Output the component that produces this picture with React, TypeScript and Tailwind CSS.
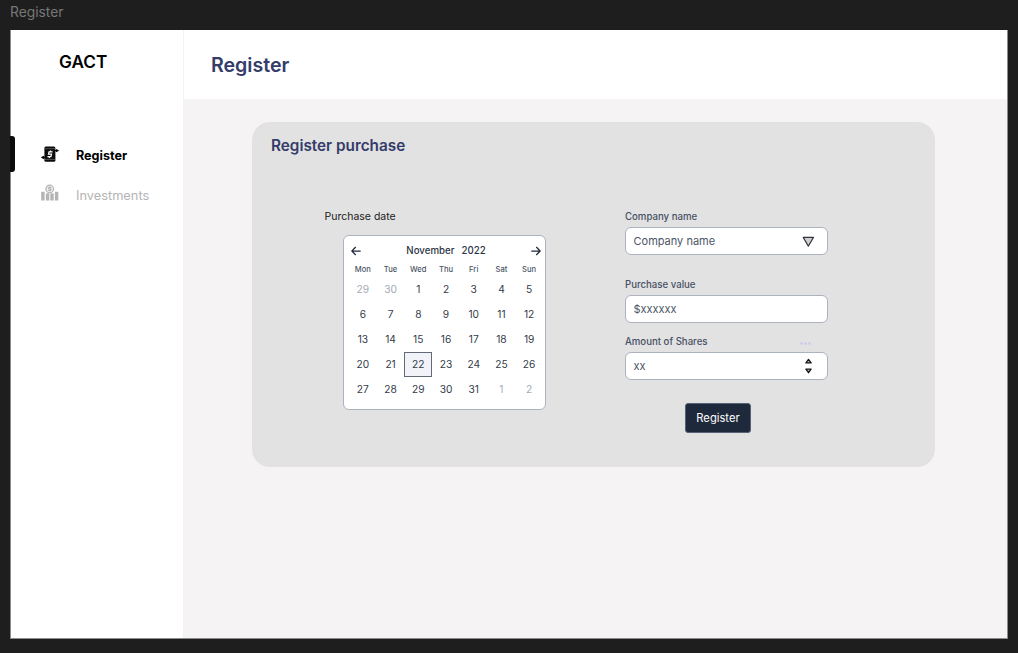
import React from "react";

const weekdays = ["Mon", "Tue", "Wed", "Thu", "Fri", "Sat", "Sun"];
const days = [29, 30, ...Array.from({ length: 31 }, (_, i) => i + 1), 1, 2];

function ReceiptIcon() {
  return (
    <svg className="h-[18px] w-[18px] shrink-0" viewBox="0 0 18 18" fill="none">
      <rect x="3.4" y="1.4" width="11" height="15.4" rx="1.5" fill="#0b0b0b" />
      <path d="M4 3.7h10M4 14.4h10" stroke="#999" strokeWidth="0.5" />
      <path d="M14 5.6h2.4M15 4.6l1.9 1-1.9 1.2M4 12.4H1.6M2.9 11.2L.9 12.4l2 1.2" fill="#0b0b0b" stroke="#0b0b0b" strokeWidth="1.3" />
      <path d="M11.6 6.9H8L7.5 9.2h3l-.6 2.4H6.4M9.7 5.5l-.4 1.4M8.5 11.6l-.3 1.4" stroke="#fff" strokeWidth="1.2" />
    </svg>
  );
}

function InvestmentsIcon() {
  return (
    <svg className="h-[18px] w-[18px] shrink-0" viewBox="0 0 18 18" fill="none">
      <g fill="#b4b4b4">
        <rect x="0.2" y="7.8" width="3.4" height="8.7" />
        <rect x="4.9" y="9.4" width="3.4" height="7.1" />
        <rect x="9.3" y="9.4" width="3.4" height="7.1" />
        <rect x="13.9" y="7.8" width="3.4" height="8.7" />
      </g>
      <circle cx="8.7" cy="5" r="3.8" fill="#eee" stroke="#b4b4b4" strokeWidth="1.2" />
      <path d="M10.3 3.5H7.6v1.4h2.3v1.5H7.2M8.7 2.6v.8M8.7 6.5v.9" stroke="#a8a8a8" strokeWidth="0.9" />
    </svg>
  );
}

function Arrow({ flip = false }: { flip?: boolean }) {
  return (
    <svg className={flip ? "h-[10px] w-[10px] rotate-180" : "h-[10px] w-[10px]"} viewBox="0 0 10 10" fill="none">
      <path d="M9.7 5H.9M4.7 1L.8 5l3.9 4" stroke="#1d2838" strokeWidth="1.25" />
    </svg>
  );
}

function Field({ label, value, children }: { label: React.ReactNode; value: string; children?: React.ReactNode }) {
  return (
    <div>
      <div className="flex h-[14px] items-center justify-between pl-[0.5px] text-[9.65px] font-medium text-[#475164]">{label}</div>
      <div className="mt-[3px] flex h-[28px] items-center justify-between rounded-[6px] border border-[#adb2bf] bg-white pr-[12px] pl-[8px] text-[11px] text-[#4b5565]">
        <span>{value}</span>
        {children}
      </div>
    </div>
  );
}

export default function App() {
  return (
    <div className="flex h-[653px] w-[1018px] flex-col overflow-hidden bg-[#1e1e1e] pr-[10px] pb-[14px] pl-[10px] font-['Inter',sans-serif]">
      <div className="h-[30px] shrink-0 pt-[2px] text-[13.8px] leading-[20px] text-[#777]">Register</div>
      <div className="flex min-h-0 flex-1 border-r border-b border-l border-[#8c8c8c] bg-white">
        <aside className="w-[173px] shrink-0 border-r border-[#f2f3f4] bg-white">
          <div className="pt-[20px] pl-[48px] text-[17.2px] leading-[24px] font-semibold text-black">GACT</div>
          <nav className="pt-[62px]">
            <div className="flex h-[36px] items-center">
              <span className="-ml-px h-[36px] w-[4.5px] rounded-r-[3px] bg-[#0b0b0b]" />
              <span className="ml-[26.5px]"><ReceiptIcon /></span>
              <span className="ml-[17px] pt-[4px] text-[12.6px] font-bold text-black">Register</span>
            </div>
            <div className="mt-[4px] flex h-[36px] items-center pl-[30px]">
              <span className="pb-[2px]"><InvestmentsIcon /></span>
              <span className="ml-[17px] pt-[3px] text-[12.8px] text-[#b4b4b4]">Investments</span>
            </div>
          </nav>
        </aside>
        <div className="flex min-w-0 flex-1 flex-col">
          <header className="h-[69px] shrink-0 bg-white pt-[21px] pl-[27px] text-[19.6px] leading-[28px] font-semibold text-[#343c6a]">
            Register
          </header>
          <main className="flex-1 bg-[#f5f3f4] pt-[23px] pl-[68px]">
            <section className="h-[345px] w-[683px] rounded-[18px] bg-[#e2e2e2] pt-[14px] pl-[19px]">
              <h2 className="text-[15.3px] leading-[20px] font-semibold text-[#343c6a]">Register purchase</h2>
              <div className="flex">
                <div className="w-[353.5px] pt-[54px] pl-[53.5px]">
                  <div className="text-[10.5px] leading-[14px] text-[#1b1b1b]">Purchase date</div>
                  <div className="mt-[11px] ml-[18.5px] h-[175px] w-[203px] rounded-[6px] border border-[#adb2bf] bg-white pr-[2px] pl-[5px]">
                    <div className="flex h-[29px] items-center justify-between pr-[2px] pl-[2px] text-[9.7px] font-medium text-[#2c3646]">
                      <Arrow />
                      <span className="flex gap-[7px] pt-[2px]"><span>November</span><span>2022</span></span>
                      <Arrow flip />
                    </div>
                    <div className="grid h-[12px] grid-cols-7 text-center text-[7.6px] leading-[9px] font-medium text-[#4b5565]">
                      {weekdays.map((day) => <span key={day}>{day}</span>)}
                    </div>
                    <div className="grid grid-cols-7 text-center text-[10.2px] text-[#323b49]">
                      {days.map((day, i) => (
                        <span
                          key={i}
                          className={
                            i === 23
                              ? "flex h-[25px] items-center justify-center border border-[#626a78] bg-[#f1f3f9]"
                              : i < 2 || i > 32
                                ? "flex h-[25px] items-center justify-center text-[#a2aab6]"
                                : "flex h-[25px] items-center justify-center"
                          }
                        >
                          {day}
                        </span>
                      ))}
                    </div>
                  </div>
                </div>
                <form className="w-[203px] pt-[54px]">
                  <Field label="Company name" value="Company name">
                    <svg className="h-[11px] w-[13px]" viewBox="0 0 13 11">
                      <path d="M1.2 1.4h10.3L6.35 10.1z" fill="#d0d0d0" stroke="#30343a" strokeWidth="1.1" strokeLinejoin="round" />
                    </svg>
                  </Field>
                  <div className="mt-[23px]"><Field label="Purchase value" value="$xxxxxx" /></div>
                  <div className="mt-[12px]">
                    <Field
                      label={
                        <>
                          <span>Amount of Shares</span>
                          <svg className="mt-[2px] mr-[17px] h-[3px] w-[11px]" viewBox="0 0 11 3" fill="#cbc6ee">
                            <circle cx="1.5" cy="1.5" r="1.2" /><circle cx="5.5" cy="1.5" r="1.2" /><circle cx="9.5" cy="1.5" r="1.2" />
                          </svg>
                        </>
                      }
                      value="xx"
                    >
                      <svg className="mr-[3px] h-[17px] w-[7px]" viewBox="0 0 7 17" fill="#bbb" stroke="#151515" strokeWidth="1.3" strokeLinejoin="round">
                        <path d="M3.5 1.4L6.1 4.9H.9zM.9 11.2h5.2L3.5 14.7z" />
                      </svg>
                    </Field>
                  </div>
                  <button type="button" className="mt-[23px] ml-[60.5px] h-[30px] w-[66px] rounded-[3px] border border-[#566176] bg-[#1e293b] text-[11.2px] text-white">
                    Register
                  </button>
                </form>
              </div>
            </section>
          </main>
        </div>
      </div>
    </div>
  );
}
